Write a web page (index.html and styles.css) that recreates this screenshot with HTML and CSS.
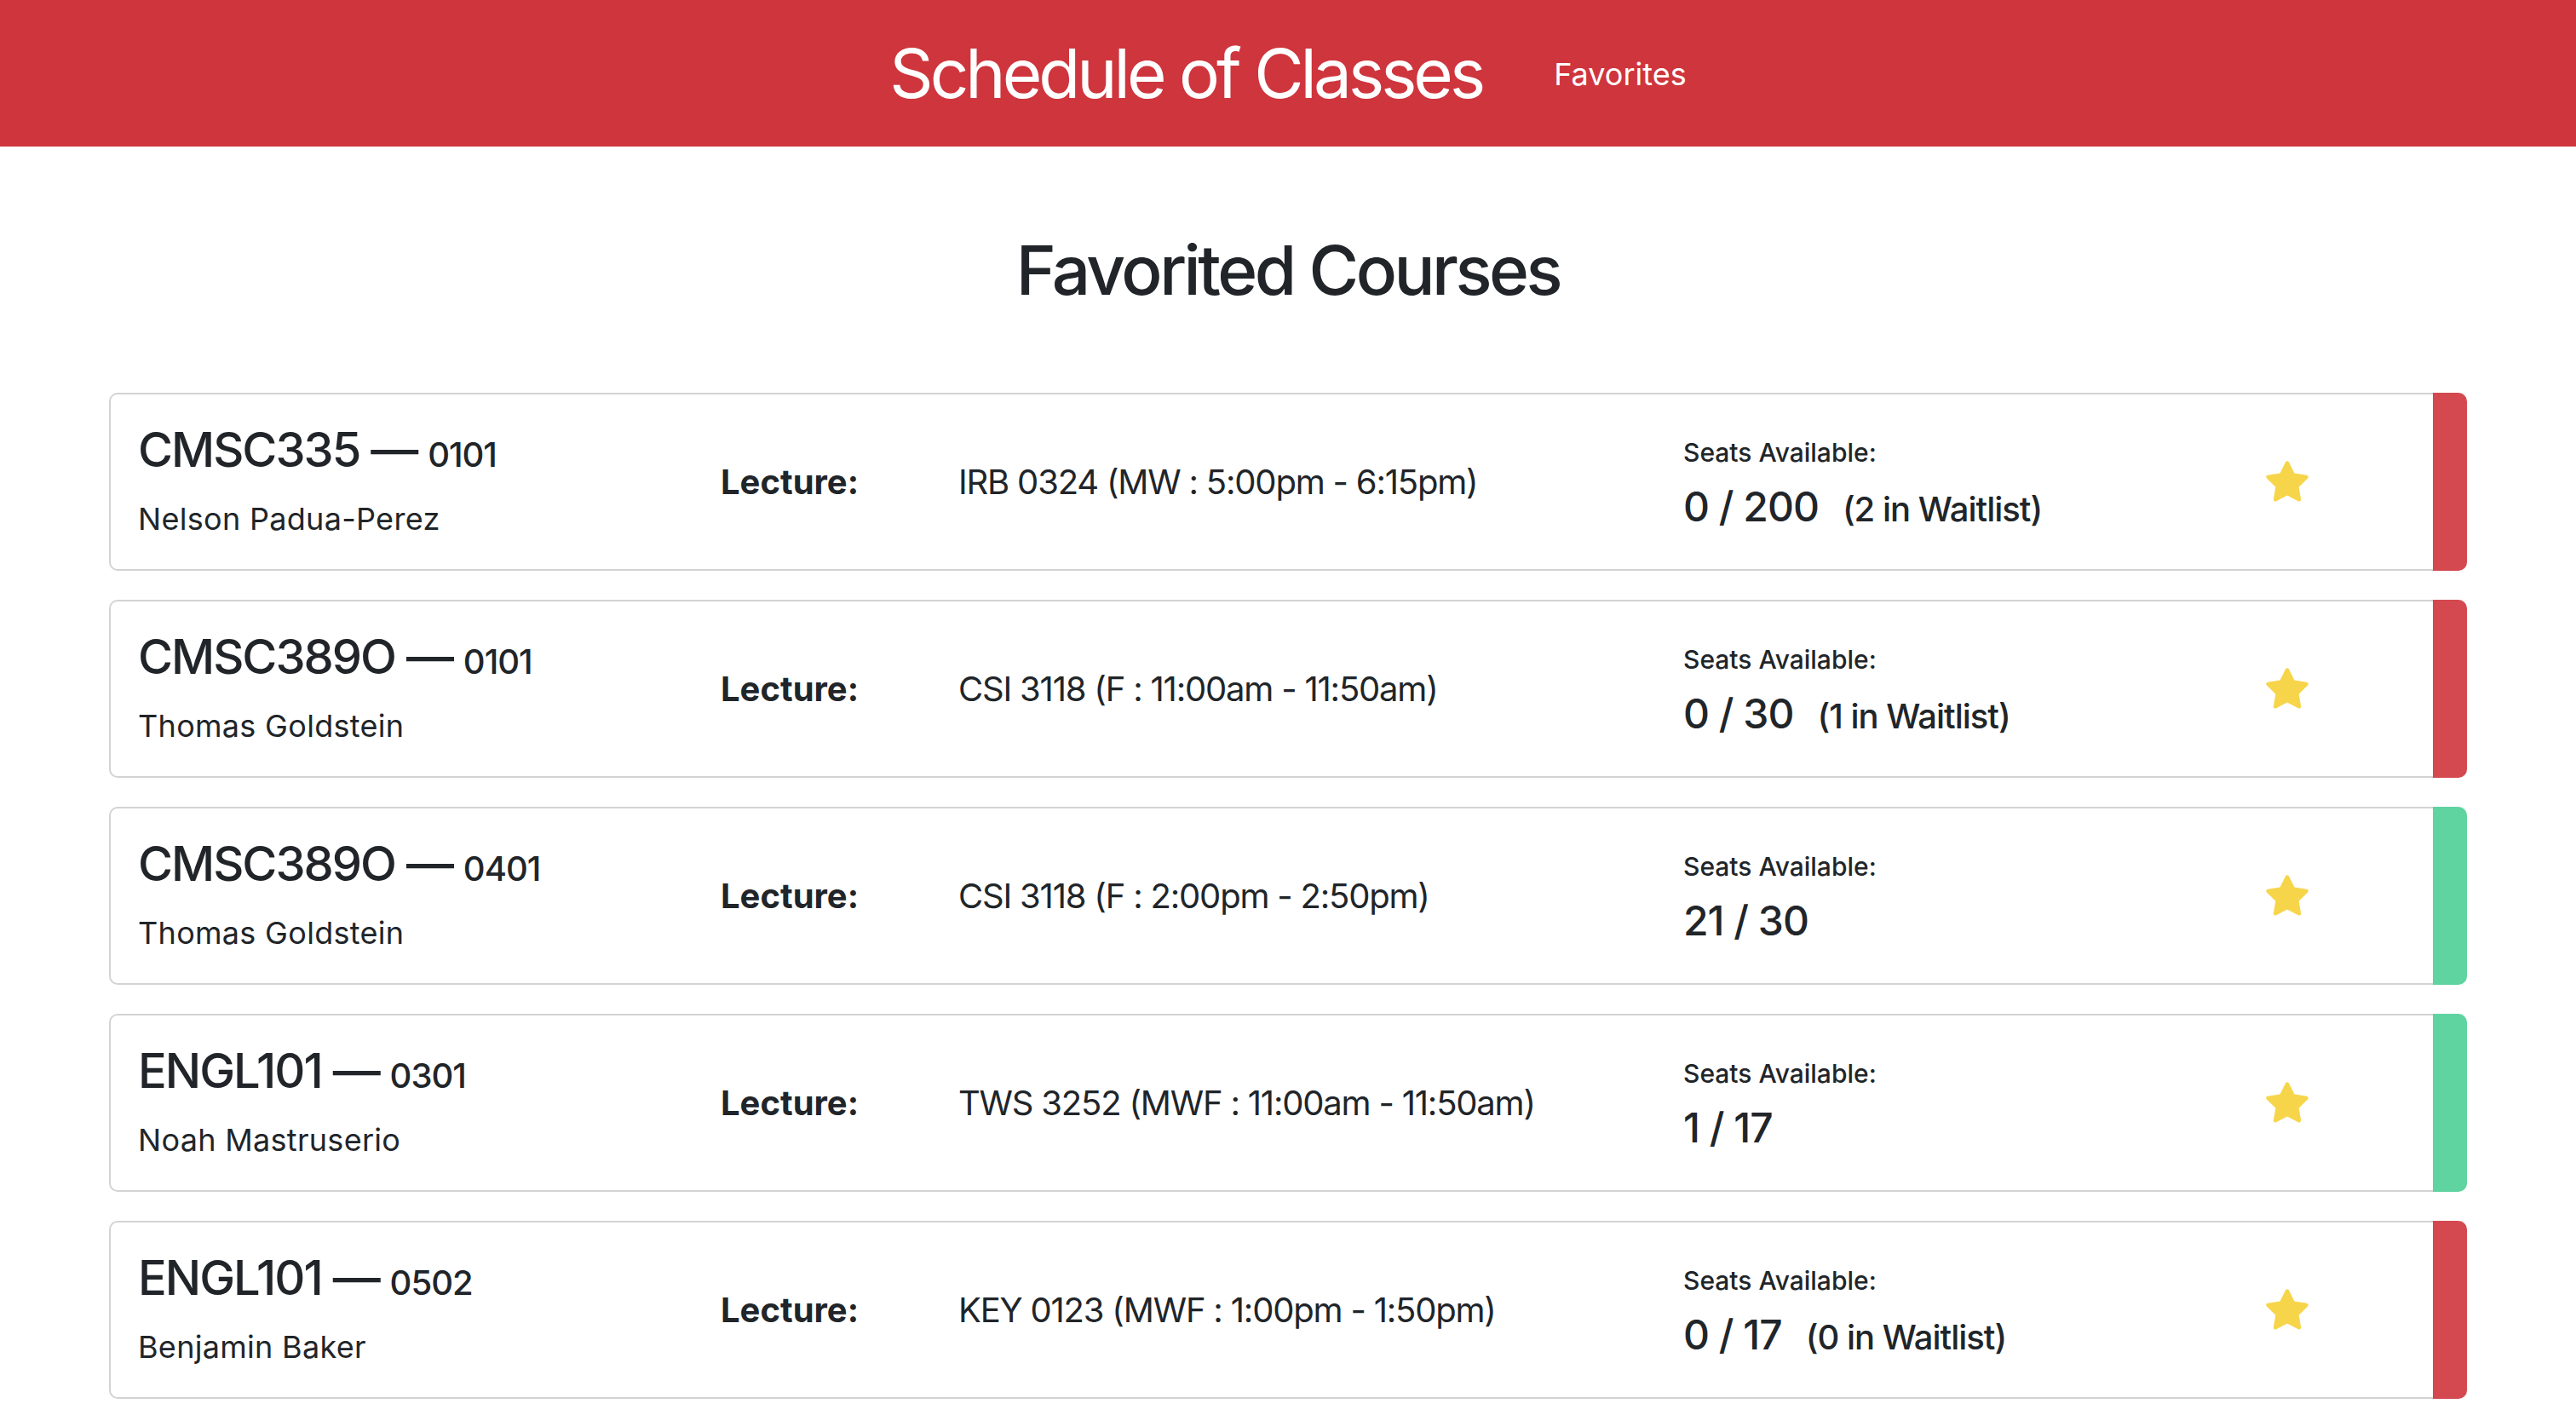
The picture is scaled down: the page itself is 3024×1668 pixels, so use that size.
FILE: index.html
```html
<!DOCTYPE html>
<html lang="en">
<head>
<meta charset="utf-8">
<title>Schedule of Classes</title>
<link rel="stylesheet" href="styles.css">
</head>
<body>
<header class="topbar">
  <div class="brand">Schedule of Classes</div>
  <a class="navlink" href="#">Favorites</a>
</header>
<main class="page">
  <h1 class="page-title">Favorited Courses</h1>

  <div class="course">
    <div class="course-body">
      <div class="c-name">
        <h3 class="code">CMSC335 — <span class="section">0101</span></h3>
        <p class="prof">Nelson Padua-Perez</p>
      </div>
      <div class="c-type">Lecture:</div>
      <div class="c-loc">IRB 0324 (MW : 5:00pm - 6:15pm)</div>
      <div class="c-seats">
        <div class="seats-label">Seats Available:</div>
        <div class="seats-count">0 / 200<span class="waitlist">(2 in Waitlist)</span></div>
      </div>
      <div class="c-star"><svg class="star" viewBox="0 0 24 24"><polygon points="12,2 15.09,8.26 22,9.27 17,14.14 18.18,21.02 12,17.77 5.82,21.02 7,14.14 2,9.27 8.91,8.26"/></svg></div>
    </div>
    <div class="status full"></div>
  </div>

  <div class="course">
    <div class="course-body">
      <div class="c-name">
        <h3 class="code">CMSC389O — <span class="section">0101</span></h3>
        <p class="prof">Thomas Goldstein</p>
      </div>
      <div class="c-type">Lecture:</div>
      <div class="c-loc">CSI 3118 (F : 11:00am - 11:50am)</div>
      <div class="c-seats">
        <div class="seats-label">Seats Available:</div>
        <div class="seats-count">0 / 30<span class="waitlist">(1 in Waitlist)</span></div>
      </div>
      <div class="c-star"><svg class="star" viewBox="0 0 24 24"><polygon points="12,2 15.09,8.26 22,9.27 17,14.14 18.18,21.02 12,17.77 5.82,21.02 7,14.14 2,9.27 8.91,8.26"/></svg></div>
    </div>
    <div class="status full"></div>
  </div>

  <div class="course">
    <div class="course-body">
      <div class="c-name">
        <h3 class="code">CMSC389O — <span class="section">0401</span></h3>
        <p class="prof">Thomas Goldstein</p>
      </div>
      <div class="c-type">Lecture:</div>
      <div class="c-loc">CSI 3118 (F : 2:00pm - 2:50pm)</div>
      <div class="c-seats">
        <div class="seats-label">Seats Available:</div>
        <div class="seats-count">21 / 30</div>
      </div>
      <div class="c-star"><svg class="star" viewBox="0 0 24 24"><polygon points="12,2 15.09,8.26 22,9.27 17,14.14 18.18,21.02 12,17.77 5.82,21.02 7,14.14 2,9.27 8.91,8.26"/></svg></div>
    </div>
    <div class="status open"></div>
  </div>

  <div class="course">
    <div class="course-body">
      <div class="c-name">
        <h3 class="code">ENGL101 — <span class="section">0301</span></h3>
        <p class="prof">Noah Mastruserio</p>
      </div>
      <div class="c-type">Lecture:</div>
      <div class="c-loc">TWS 3252 (MWF : 11:00am - 11:50am)</div>
      <div class="c-seats">
        <div class="seats-label">Seats Available:</div>
        <div class="seats-count">1 / 17</div>
      </div>
      <div class="c-star"><svg class="star" viewBox="0 0 24 24"><polygon points="12,2 15.09,8.26 22,9.27 17,14.14 18.18,21.02 12,17.77 5.82,21.02 7,14.14 2,9.27 8.91,8.26"/></svg></div>
    </div>
    <div class="status open"></div>
  </div>

  <div class="course">
    <div class="course-body">
      <div class="c-name">
        <h3 class="code">ENGL101 — <span class="section">0502</span></h3>
        <p class="prof">Benjamin Baker</p>
      </div>
      <div class="c-type">Lecture:</div>
      <div class="c-loc">KEY 0123 (MWF : 1:00pm - 1:50pm)</div>
      <div class="c-seats">
        <div class="seats-label">Seats Available:</div>
        <div class="seats-count">0 / 17<span class="waitlist">(0 in Waitlist)</span></div>
      </div>
      <div class="c-star"><svg class="star" viewBox="0 0 24 24"><polygon points="12,2 15.09,8.26 22,9.27 17,14.14 18.18,21.02 12,17.77 5.82,21.02 7,14.14 2,9.27 8.91,8.26"/></svg></div>
    </div>
    <div class="status full"></div>
  </div>
</main>
</body>
</html>
```

FILE: styles.css
```css
* { box-sizing: border-box; }

html, body {
  margin: 0;
  padding: 0;
  background: #ffffff;
}

body {
  font-family: Inter, "Helvetica Neue", "Liberation Sans", Arial, sans-serif;
  color: #212529;
  font-size: 36px;
  line-height: 1.5;
}

.topbar {
  height: 172px;
  background: #cf353d;
  display: flex;
  align-items: center;
  justify-content: center;
  gap: 84px;
}

.brand {
  color: #ffffff;
  font-size: 80px;
  font-weight: 400;
  line-height: 1;
  letter-spacing: -4px;
}

.navlink {
  color: #ffffff;
  font-size: 36px;
  line-height: 1;
  text-decoration: none;
  margin-top: 2px;
}

.page {
  margin: 0 128px;
}

.page-title {
  margin: 97px 0 96px;
  text-align: center;
  font-size: 80px;
  font-weight: 500;
  line-height: 1.2;
  letter-spacing: -3.5px;
}

.course {
  display: flex;
  margin-bottom: 34px;
}

.course-body {
  flex: 1;
  display: grid;
  grid-template-columns: 684px 279px 851px 684px 50px;
  align-items: center;
  padding: 32px 32px;
  border: 2px solid #d3d3d3;
  border-right: none;
  border-radius: 10px 0 0 10px;
}

.status {
  width: 40px;
  border-radius: 0 10px 10px 0;
}

.status.full { background: #d4494f; }
.status.open { background: #5fd3a0; }

.code {
  margin: 0 0 20px;
  font-size: 56px;
  font-weight: 500;
  line-height: 67px;
  letter-spacing: -2px;
}

.section {
  font-size: 40px;
  font-weight: 500;
  line-height: 1;
  letter-spacing: -1px;
}

.prof {
  margin: 0;
  font-size: 36px;
  line-height: 54px;
  letter-spacing: 0.3px;
}

.c-type {
  font-size: 40px;
  font-weight: 700;
  line-height: 1.5;
}

.c-loc {
  font-size: 40px;
  line-height: 1.5;
  letter-spacing: -1.2px;
}

.c-seats {
  display: flex;
  flex-direction: column;
  gap: 12px;
}

.seats-label {
  font-size: 30px;
  font-weight: 500;
  line-height: 45px;
}

.seats-count {
  font-size: 48px;
  font-weight: 500;
  line-height: 57px;
  letter-spacing: -1px;
}

.waitlist {
  font-size: 40px;
  font-weight: 500;
  line-height: 1;
  margin-left: 28px;
  letter-spacing: -1px;
}

.c-star {
  display: flex;
  align-items: center;
  justify-content: center;
}

.star {
  width: 54px;
  height: 54px;
  display: block;
  margin: -2px;
}

.star polygon {
  fill: #f7d54a;
  stroke: #f7d54a;
  stroke-width: 2;
  stroke-linejoin: round;
}
```
